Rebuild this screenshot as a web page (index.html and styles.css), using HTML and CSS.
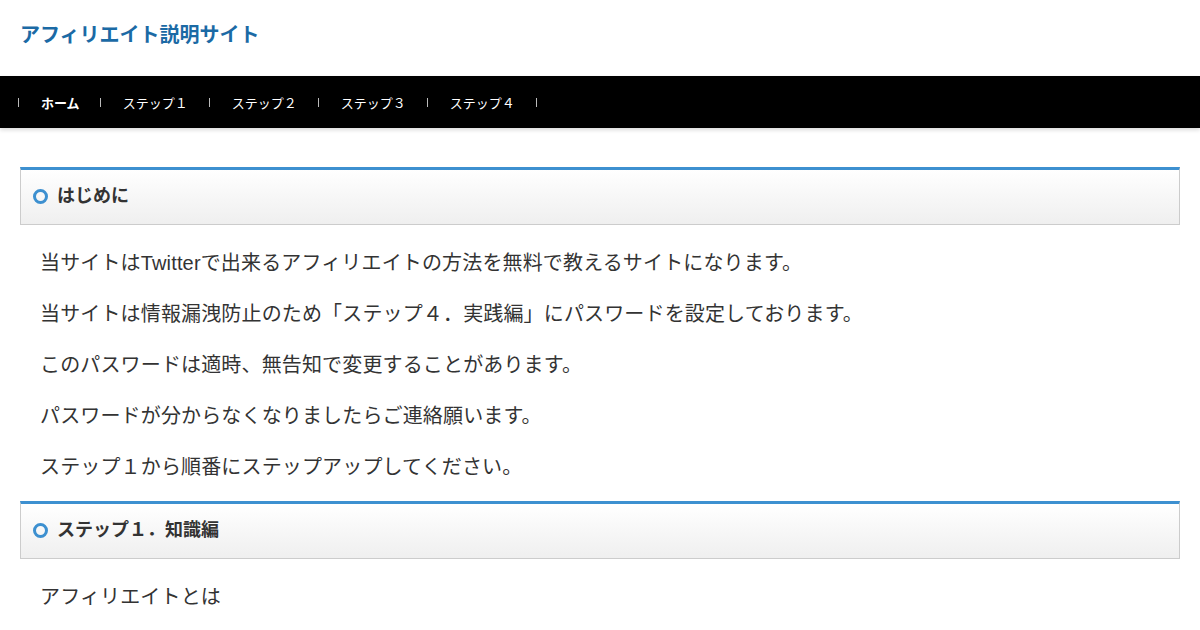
FILE: index.html
```html
<!DOCTYPE html>
<html lang="ja">
<head>
    <meta charset="UTF-8">
    <meta name="viewport" content="width=device-width, initial-scale=1.0">
    <title>アフィリエイト説明サイト</title>
    <link rel="stylesheet" href="styles.css">
</head>
<body>
    <header class="site-header">
        <h1 class="site-title">アフィリエイト説明サイト</h1>
    </header>

    <nav class="global-nav">
        <ul>
            <li class="current"><a href="#">ホーム</a></li>
            <li><a href="#">ステップ１</a></li>
            <li><a href="#">ステップ２</a></li>
            <li><a href="#">ステップ３</a></li>
            <li><a href="#">ステップ４</a></li>
        </ul>
    </nav>

    <main class="content">
        <h2 class="section-title">はじめに</h2>
        <p>当サイトはTwitterで出来るアフィリエイトの方法を無料で教えるサイトになります。</p>
        <p>当サイトは情報漏洩防止のため「ステップ４．実践編」にパスワードを設定しております。</p>
        <p>このパスワードは適時、無告知で変更することがあります。</p>
        <p>パスワードが分からなくなりましたらご連絡願います。</p>
        <p>ステップ１から順番にステップアップしてください。</p>

        <h2 class="section-title">ステップ１．知識編</h2>
        <p>アフィリエイトとは</p>
    </main>
</body>
</html>
```

FILE: styles.css
```css
body {
    margin: 0;
    background: #fff;
    color: #333;
    font-family: "Liberation Sans", "Noto Sans CJK JP", sans-serif;
}
.site-header {
    height: 76px;
    padding: 0 20px;
    display: flex;
    align-items: center;
    box-sizing: border-box;
}
.site-title {
    margin: 0 0 10px;
    font-size: 20px;
    font-weight: bold;
    color: #1b6aa5;
}
.global-nav {
    background: #000;
    height: 52px;
    box-shadow: 0 2px 4px rgba(0,0,0,0.15);
}
.global-nav ul {
    list-style: none;
    margin: 0;
    padding: 0 0 0 17px;
    display: flex;
    align-items: center;
    height: 100%;
}
.global-nav li {
    display: flex;
    align-items: center;
    font-size: 13px;
}
.global-nav li::before,
.global-nav ul::after {
    content: "";
    width: 1px;
    height: 9px;
    margin: 0 1px;
    background: #bbb;
}
.global-nav a {
    color: #fff;
    text-decoration: none;
    padding: 0 20px 0 21px;
}
.global-nav li.current a {
    font-weight: bold;
    padding-right: 19px;
}
.content {
    padding: 39px 20px 0;
}
.section-title {
    margin: 0 0 21px;
    padding: 16px 12px 17px;
    font-size: 18px;
    line-height: 21px;
    font-weight: bold;
    color: #333;
    border: 1px solid #ccc;
    border-top: 3px solid #3d90d0;
    background: linear-gradient(#fff, #efefef);
    display: flex;
    align-items: center;
    gap: 9px;
}
.section-title::before {
    content: "";
    width: 9px;
    height: 9px;
    border: 3px solid #3d90d0;
    border-radius: 50%;
    flex-shrink: 0;
}
.content p {
    margin: 0 0 17px;
    padding-left: 20px;
    font-size: 20px;
    line-height: 34px;
    letter-spacing: 0.15px;
    color: #333;
}
```
